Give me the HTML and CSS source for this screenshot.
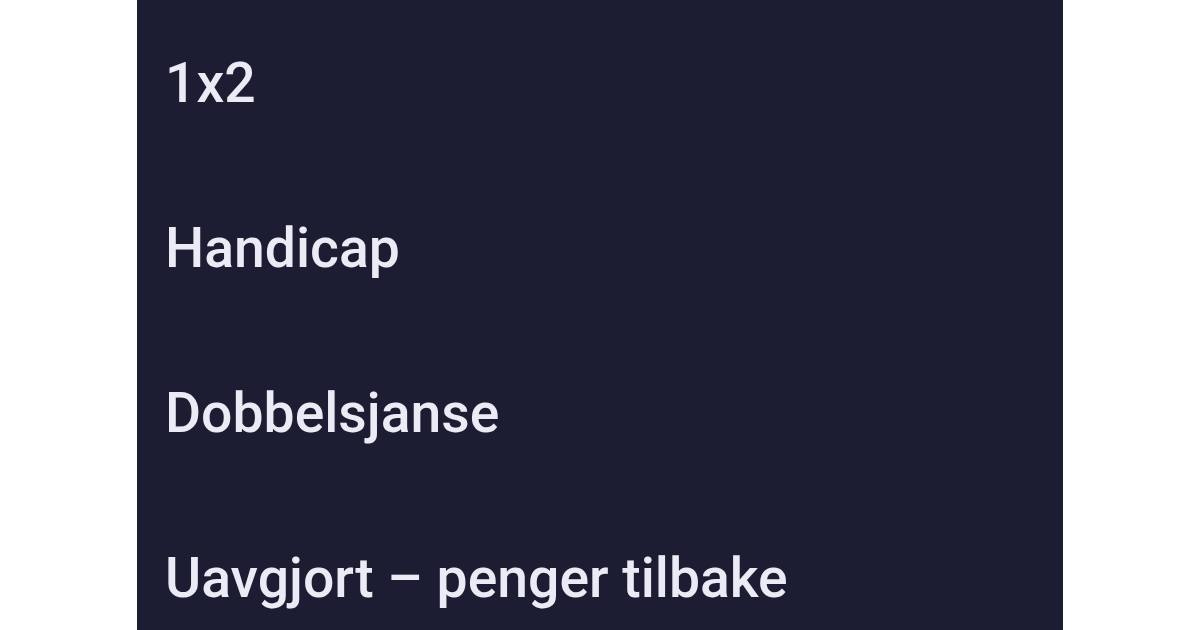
FILE: index.html
```html
<!DOCTYPE html>
<html lang="no">
  <head>
    <meta charset="UTF-8" />
    <meta name="viewport" content="width=device-width, initial-scale=1.0" />
    <title>Spilltyper</title>
    <link rel="stylesheet" href="styles.css">
  </head>
  <body>
    <div class="page">
      <!-- markedsliste -->
      <ul class="market-list">
        <li class="market-item">1x2</li>
        <li class="market-item">Handicap</li>
        <li class="market-item">Dobbelsjanse</li>
        <li class="market-item">Uavgjort – penger tilbake</li>
      </ul>
    </div>
  </body>
</html>
```

FILE: styles.css
```css
html,
body {
  margin: 0;
  padding: 0;
  background-color: #fff;
  height: 100%;
  overflow: hidden;
}
.page {
  width: 926px;
  height: 630px;
  margin-left: 137px;
  background-color: #1c1c33;
  overflow: hidden;
}
.market-list {
  list-style: none;
  margin: 0;
  padding: 1px 0 0 28px;
}
.market-item {
  font-family: Roboto, "Noto Sans", Arial, sans-serif;
  font-weight: 500;
  font-size: 55.3px;
  line-height: 165px;
  color: #ebebf5;
  white-space: nowrap;
}
```
